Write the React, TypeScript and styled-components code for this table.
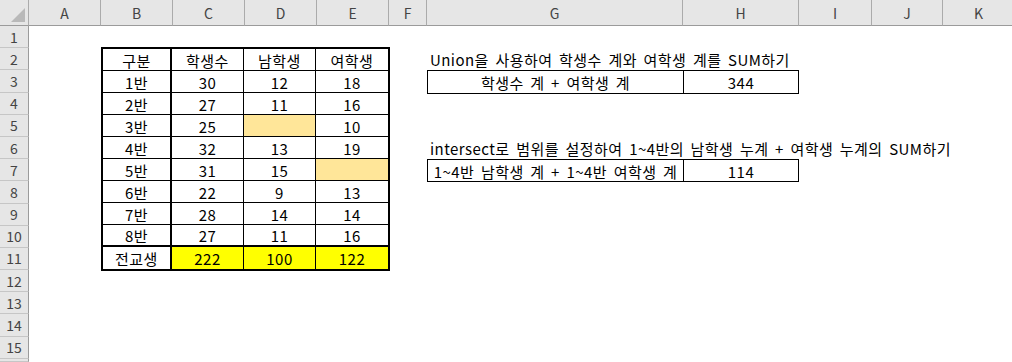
import React from "react";
import styled, { createGlobalStyle, css } from "styled-components";

const GlobalStyle = createGlobalStyle`
  html, body {
    margin: 0;
    padding: 0;
    background: #ffffff;
    overflow: hidden;
  }
  body {
    font-family: "Noto Sans CJK KR", "Noto Sans", sans-serif;
  }
`;

const COLS = ["A", "B", "C", "D", "E", "F", "G", "H", "I", "J", "K"];
const COL_WIDTHS = [72, 72, 72, 72, 72, 38, 256, 116, 73, 71, 72];
const ROW_COUNT = 15;
const ROW_H = 22.2;

const CELL_FONT = `"Noto Sans CJK KR", "Noto Sans", sans-serif`;

/* Shared type settings for worksheet cell text */
const cellText = css`
  font-family: ${CELL_FONT};
  font-size: 15px;
  line-height: 1;
  letter-spacing: 0.45px;
  word-spacing: 2.8px;
  color: #000000;
  white-space: nowrap;
`;

const Sheet = styled.div`
  display: grid;
  grid-template-columns: 29px ${COL_WIDTHS.map((w) => `${w}px`).join(" ")};
  grid-template-rows: 26px repeat(${ROW_COUNT}, ${ROW_H}px) 1fr;
  width: 1012px;
  height: 362px;
  overflow: hidden;
  background: #ffffff;
`;

const Corner = styled.div`
  grid-column: 1;
  grid-row: 1;
  position: relative;
  background: #e6e6e6;
  border-right: 1px solid #ababab;
  border-bottom: 1px solid #9b9b9b;
  box-sizing: border-box;

  &::after {
    content: "";
    position: absolute;
    right: 3px;
    bottom: 3px;
    width: 0;
    height: 0;
    border-left: 14px solid transparent;
    border-bottom: 14px solid #b9b9b9;
  }
`;

const ColHeader = styled.div`
  grid-row: 1;
  display: flex;
  align-items: center;
  justify-content: center;
  background: #e6e6e6;
  border-right: 1px solid #ababab;
  border-bottom: 1px solid #9b9b9b;
  box-sizing: border-box;
  font-family: ${CELL_FONT};
  font-size: 14px;
  line-height: 1;
  color: #444444;
  padding-top: 1px;
`;

const RowHeader = styled.div`
  grid-column: 1;
  display: flex;
  align-items: center;
  justify-content: center;
  background: #e6e6e6;
  border-right: 1px solid #9b9b9b;
  border-bottom: 1px solid #c6c6c6;
  box-sizing: border-box;
  font-family: ${CELL_FONT};
  font-size: 14px;
  line-height: 1;
  color: #444444;
  overflow: hidden;
`;

/* Bordered data block B2:E11 */
const DataTable = styled.div`
  grid-column: 3 / span 4;
  grid-row: 3 / span 10;
  margin: -1px -1px -1px 0;
  display: grid;
  grid-template-columns: 69px 72px 72px minmax(0, 1fr);
  grid-template-rows: repeat(10, minmax(0, 1fr));
  border: 2px solid #000000;
  box-sizing: border-box;
  overflow: hidden;
`;

type Fill = "none" | "gold" | "yellow";

const FILLS: Record<Fill, string> = {
  none: "#ffffff",
  gold: "#ffe699",
  yellow: "#ffff00",
};

const DataCell = styled.div<{
  $fill: Fill;
  $first: boolean;
  $lastCol: boolean;
  $thickBottom: boolean;
  $lastRow: boolean;
}>`
  ${cellText};
  display: flex;
  align-items: center;
  justify-content: center;
  box-sizing: border-box;
  min-height: 0;
  background: ${(p) => FILLS[p.$fill]};
  border-right: ${(p) => (p.$lastCol ? "none" : p.$first ? "2px solid #000" : "1px solid #000")};
  border-bottom: ${(p) => (p.$lastRow ? "none" : p.$thickBottom ? "2px solid #000" : "1px solid #000")};
  padding-top: 1px;
`;

const Note = styled.div<{ $row: number }>`
  ${cellText};
  grid-column: 8;
  grid-row: ${(p) => p.$row + 1};
  display: flex;
  align-items: center;
  padding-left: 3px;
  overflow: visible;
  padding-top: 1px;
`;

const SumBox = styled.div<{ $row: number }>`
  grid-column: 8 / span 2;
  grid-row: ${(p) => p.$row + 1};
  display: grid;
  grid-template-columns: 256px minmax(0, 1fr);
  border: 1px solid #000000;
  margin: 0 0 -1px 0;
  box-sizing: border-box;
`;

const SumCell = styled.div<{ $divider?: boolean }>`
  ${cellText};
  display: flex;
  align-items: center;
  justify-content: center;
  border-right: ${(p) => (p.$divider ? "1px solid #000" : "none")};
  overflow: hidden;
  padding-top: 1px;
`;

type Row = { cells: (string | number)[]; fills?: Fill[] };

const rows: Row[] = [
  { cells: ["구분", "학생수", "남학생", "여학생"] },
  { cells: ["1반", 30, 12, 18] },
  { cells: ["2반", 27, 11, 16] },
  { cells: ["3반", 25, "", 10], fills: ["none", "none", "gold", "none"] },
  { cells: ["4반", 32, 13, 19] },
  { cells: ["5반", 31, 15, ""], fills: ["none", "none", "none", "gold"] },
  { cells: ["6반", 22, 9, 13] },
  { cells: ["7반", 28, 14, 14] },
  { cells: ["8반", 27, 11, 16] },
  { cells: ["전교생", 222, 100, 122], fills: ["none", "yellow", "yellow", "yellow"] },
];

export default function App() {
  return (
    <>
      <GlobalStyle />
      <Sheet>
        <Corner />
        {COLS.map((c, i) => (
          <ColHeader key={c} style={{ gridColumn: i + 2 }}>
            {c}
          </ColHeader>
        ))}
        {Array.from({ length: ROW_COUNT }, (_, i) => (
          <RowHeader key={i} style={{ gridRow: i + 2 }}>
            {i + 1}
          </RowHeader>
        ))}
        {/* top sliver of the next row, clipped by the window */}
        <RowHeader style={{ gridRow: ROW_COUNT + 2 }} />

        <DataTable>
          {rows.map((r, ri) =>
            r.cells.map((v, ci) => (
              <DataCell
                key={`${ri}-${ci}`}
                $fill={r.fills ? r.fills[ci] : "none"}
                $first={ci === 0}
                $lastCol={ci === 3}
                $thickBottom={ri === 8}
                $lastRow={ri === rows.length - 1}
              >
                {v}
              </DataCell>
            ))
          )}
        </DataTable>

        <Note $row={2}>Union을 사용하여 학생수 계와 여학생 계를 SUM하기</Note>
        <SumBox $row={3}>
          <SumCell $divider>학생수 계 + 여학생 계</SumCell>
          <SumCell>344</SumCell>
        </SumBox>

        <Note $row={6}>intersect로 범위를 설정하여 1~4반의 남학생 누계 + 여학생 누계의 SUM하기</Note>
        <SumBox $row={7}>
          <SumCell $divider>1~4반 남학생 계 + 1~4반 여학생 계</SumCell>
          <SumCell>114</SumCell>
        </SumBox>
      </Sheet>
    </>
  );
}
